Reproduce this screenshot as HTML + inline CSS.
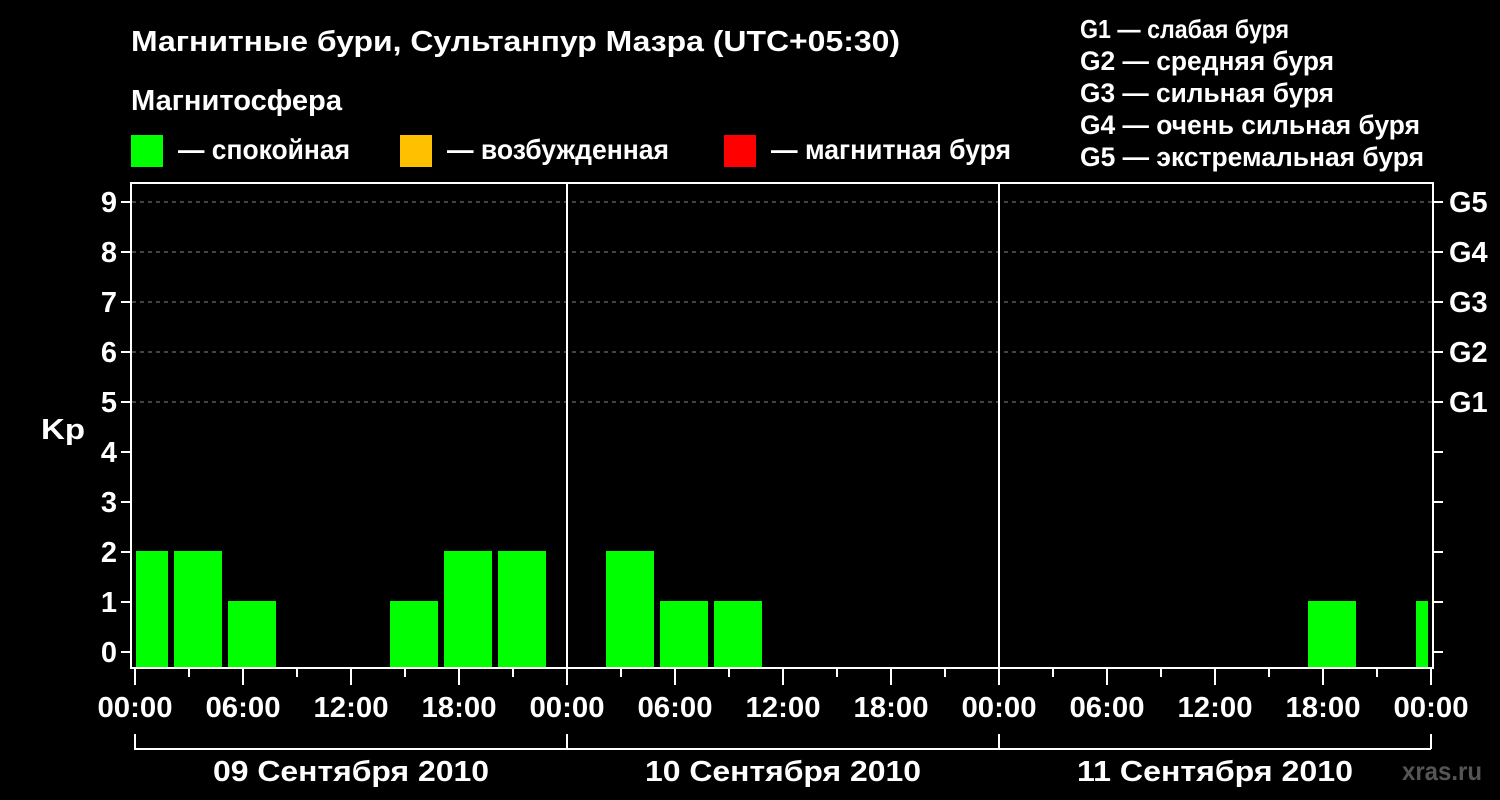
<!DOCTYPE html>
<html><head><meta charset="utf-8"><style>
html,body{margin:0;padding:0;background:#000;width:1500px;height:800px;overflow:hidden}
svg{display:block}
text{font-family:"Liberation Sans",sans-serif;font-weight:bold;fill:#fff}
</style></head><body>
<svg width="1500" height="800" viewBox="0 0 1500 800">
<rect width="1500" height="800" fill="#000"/>
<text x="131" y="51" font-size="29" textLength="769" lengthAdjust="spacingAndGlyphs">Магнитные бури, Сультанпур Мазра (UTC+05:30)</text>
<text x="131" y="110" font-size="29" textLength="211" lengthAdjust="spacingAndGlyphs">Магнитосфера</text>
<rect x="131" y="135" width="32" height="32" fill="#00ff00"/>
<text x="178" y="159" font-size="28" textLength="172" lengthAdjust="spacingAndGlyphs">— спокойная</text>
<rect x="400" y="135" width="32" height="32" fill="#ffc000"/>
<text x="447" y="159" font-size="28" textLength="222" lengthAdjust="spacingAndGlyphs">— возбужденная</text>
<rect x="724" y="135" width="32" height="32" fill="#ff0000"/>
<text x="771" y="159" font-size="28" textLength="240" lengthAdjust="spacingAndGlyphs">— магнитная буря</text>
<g font-size="27">
<text x="1080" y="38" font-size="26" textLength="209" lengthAdjust="spacingAndGlyphs">G1 — слабая буря</text>
<text x="1080" y="70" textLength="254" lengthAdjust="spacingAndGlyphs">G2 — средняя буря</text>
<text x="1080" y="102" textLength="254" lengthAdjust="spacingAndGlyphs">G3 — сильная буря</text>
<text x="1080" y="134" textLength="340" lengthAdjust="spacingAndGlyphs">G4 — очень сильная буря</text>
<text x="1080" y="166" textLength="344" lengthAdjust="spacingAndGlyphs">G5 — экстремальная буря</text>
</g>
<g stroke="#888" stroke-width="1" stroke-dasharray="4,4">
<line x1="132" y1="202" x2="1432" y2="202"/>
<line x1="132" y1="252" x2="1432" y2="252"/>
<line x1="132" y1="302" x2="1432" y2="302"/>
<line x1="132" y1="352" x2="1432" y2="352"/>
<line x1="132" y1="402" x2="1432" y2="402"/>
</g>
<g fill="#00ff00">
<rect x="136" y="551" width="32" height="117"/>
<rect x="174" y="551" width="48" height="117"/>
<rect x="228" y="601" width="48" height="67"/>
<rect x="390" y="601" width="48" height="67"/>
<rect x="444" y="551" width="48" height="117"/>
<rect x="498" y="551" width="48" height="117"/>
<rect x="606" y="551" width="48" height="117"/>
<rect x="660" y="601" width="48" height="67"/>
<rect x="714" y="601" width="48" height="67"/>
<rect x="1308" y="601" width="48" height="67"/>
<rect x="1416" y="601" width="12" height="67"/>
</g>
<g stroke="#fff" stroke-width="2" fill="none">
<rect x="131" y="183" width="1302" height="485"/>
<line x1="567" y1="183" x2="567" y2="668"/>
<line x1="999" y1="183" x2="999" y2="668"/>
<path d="M121 202H131M121 252H131M121 302H131M121 352H131M121 402H131M121 452H131M121 502H131M121 552H131M121 602H131M121 652H131"/>
<path d="M1433 202H1443M1433 252H1443M1433 302H1443M1433 352H1443M1433 402H1443M1433 452H1443M1433 502H1443M1433 552H1443M1433 602H1443M1433 652H1443"/>
<path d="M135 668V685M243 668V685M351 668V685M459 668V685M567 668V685M675 668V685M783 668V685M891 668V685M999 668V685M1107 668V685M1215 668V685M1323 668V685M1431 668V685"/>
<path d="M189 668V677M297 668V677M405 668V677M513 668V677M621 668V677M729 668V677M837 668V677M945 668V677M1053 668V677M1161 668V677M1269 668V677M1377 668V677"/>
<path d="M135 734V749H1431M567 734V749M999 734V749M1431 734V749"/>
</g>
<g font-size="29" text-anchor="end">
<text x="117" y="212">9</text><text x="117" y="262">8</text><text x="117" y="312">7</text><text x="117" y="362">6</text><text x="117" y="412">5</text><text x="117" y="462">4</text><text x="117" y="512">3</text><text x="117" y="562">2</text><text x="117" y="612">1</text><text x="117" y="662">0</text>
</g>
<text x="41" y="439" font-size="29" textLength="44" lengthAdjust="spacingAndGlyphs">Kp</text>
<g font-size="29">
<text x="1449" y="212">G5</text><text x="1449" y="262">G4</text><text x="1449" y="312">G3</text><text x="1449" y="362">G2</text><text x="1449" y="412">G1</text>
</g>
<g font-size="29" text-anchor="middle">
<text x="135" y="717" textLength="75" lengthAdjust="spacingAndGlyphs">00:00</text><text x="243" y="717" textLength="75" lengthAdjust="spacingAndGlyphs">06:00</text><text x="351" y="717" textLength="75" lengthAdjust="spacingAndGlyphs">12:00</text><text x="459" y="717" textLength="75" lengthAdjust="spacingAndGlyphs">18:00</text><text x="567" y="717" textLength="75" lengthAdjust="spacingAndGlyphs">00:00</text>
<text x="675" y="717" textLength="75" lengthAdjust="spacingAndGlyphs">06:00</text><text x="783" y="717" textLength="75" lengthAdjust="spacingAndGlyphs">12:00</text><text x="891" y="717" textLength="75" lengthAdjust="spacingAndGlyphs">18:00</text><text x="999" y="717" textLength="75" lengthAdjust="spacingAndGlyphs">00:00</text>
<text x="1107" y="717" textLength="75" lengthAdjust="spacingAndGlyphs">06:00</text><text x="1215" y="717" textLength="75" lengthAdjust="spacingAndGlyphs">12:00</text><text x="1323" y="717" textLength="75" lengthAdjust="spacingAndGlyphs">18:00</text><text x="1431" y="717" textLength="75" lengthAdjust="spacingAndGlyphs">00:00</text>
<text x="351" y="781" textLength="276" lengthAdjust="spacingAndGlyphs">09 Сентября 2010</text>
<text x="783" y="781" textLength="276" lengthAdjust="spacingAndGlyphs">10 Сентября 2010</text>
<text x="1215" y="781" textLength="276" lengthAdjust="spacingAndGlyphs">11 Сентября 2010</text>
</g>
<text x="1402" y="780" font-size="26" style="fill:#555" textLength="80" lengthAdjust="spacingAndGlyphs">xras.ru</text>
</svg>
</body></html>
